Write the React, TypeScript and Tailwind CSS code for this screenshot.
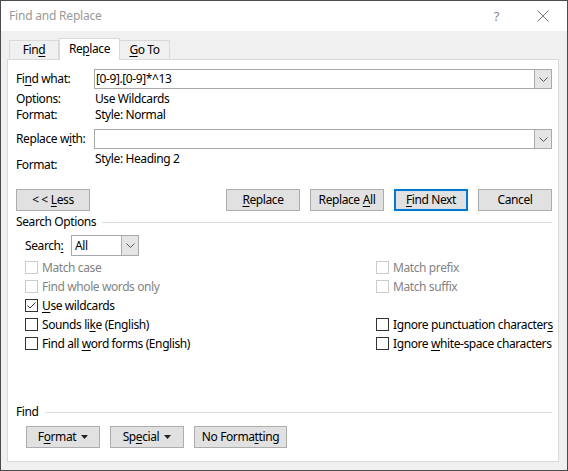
import type { ReactNode } from "react";

const FONT = { fontFamily: '"Noto Sans", "Open Sans", sans-serif' };

function Btn({ children, primary, w = "w-[74px]" }: { children: ReactNode; primary?: boolean; w?: string }) {
  return (
    <div
      className={`${w} h-[22px] flex items-center justify-center bg-[#e1e1e1] text-black ${
        primary ? "border-2 border-[#0078d7]" : "border border-[#adadad]"
      }`}
    >
      {children}
    </div>
  );
}

function Chevron() {
  return (
    <svg width="9" height="5" viewBox="0 0 9 5" fill="none">
      <path d="M0.5 0.5L4.5 4.5L8.5 0.5" stroke="#555" strokeWidth="1" />
    </svg>
  );
}

function Caret() {
  return (
    <svg width="7" height="4" viewBox="0 0 7 4" className="ml-[5px]">
      <path d="M0 0H7L3.5 4Z" fill="#222" />
    </svg>
  );
}

function Combo({ value }: { value?: string }) {
  return (
    <div className="flex-1 h-[20px] flex border border-[#a9a9a9] bg-white">
      <div className="flex-1 flex items-center pl-[1px] text-black">{value}</div>
      <div className="w-[17px] bg-[#e5e5e5] border-l border-[#acacac] flex items-center justify-center">
        <Chevron />
      </div>
    </div>
  );
}

function Check({ label, checked, disabled }: { label: ReactNode; checked?: boolean; disabled?: boolean }) {
  return (
    <div className="h-[19px] flex items-center gap-[4px] whitespace-nowrap">
      <div
        className={`w-[13px] h-[13px] shrink-0 border bg-white flex items-center justify-center ${
          disabled ? "border-[#cccccc]" : "border-[#333333]"
        }`}
      >
        {checked && (
          <svg width="11" height="11" viewBox="0 0 11 11" fill="none">
            <path d="M1.5 5.5L4 8L9.5 2.5" stroke="#333" strokeWidth="1" />
          </svg>
        )}
      </div>
      <span className={disabled ? "text-[#838383]" : "text-black"}>{label}</span>
    </div>
  );
}

function Section({ title }: { title: string }) {
  return (
    <div className="h-4 flex items-center gap-[6px]">
      <span className="text-black">{title}</span>
      <div className="flex-1 h-px bg-[#dcdcdc]" />
    </div>
  );
}

export default function App() {
  return (
    <div
      className="w-[568px] h-[471px] flex flex-col border border-[#4b4b4b] bg-[#f0f0f0] text-[12px] leading-4 tracking-[-0.4px] select-none"
      style={FONT}
    >
      {/* Title bar */}
      <div className="h-[30px] shrink-0 bg-white flex items-center pl-[8px]">
        <span className="text-[#999999] tracking-[-0.2px]">Find and Replace</span>
        <span className="ml-auto mr-[38px] text-[#888888] text-[13px]">?</span>
        <svg width="12" height="12" viewBox="0 0 12 12" className="mr-[18px]">
          <path d="M0.5 0.5L11.5 11.5M11.5 0.5L0.5 11.5" stroke="#777" strokeWidth="1" />
        </svg>
      </div>

      <div className="flex-1 flex flex-col pt-[7px] pl-[6px] pr-[8px] pb-[8px]">
        {/* Tabs */}
        <div className="flex items-end pl-[2px] h-[21px]">
          <div className="w-[50px] h-[19px] flex items-center justify-center border border-b-0 border-[#d9d9d9] text-black">
            <span>
              Fin<u className="underline-offset-2">d</u>
            </span>
          </div>
          <div className="relative z-10 w-[61px] h-[22px] -mb-px flex items-center justify-center bg-white border border-b-0 border-[#d9d9d9] text-black pb-[2px]">
            <span>
              Re<u className="underline-offset-2">p</u>lace
            </span>
          </div>
          <div className="w-[50px] h-[19px] flex items-center justify-center border border-b-0 border-l-0 border-[#d9d9d9] text-black">
            <span>
              <u className="underline-offset-2">G</u>o To
            </span>
          </div>
        </div>

        {/* Tab page */}
        <div className="flex-1 flex flex-col bg-white border border-[#d9d9d9] pt-[9px] pl-[8px] pr-[6px] pb-[13px] text-black">
          <div className="flex h-[20px] items-center">
            <span className="w-[78px]">
              Fi<u className="underline-offset-2">n</u>d what:
            </span>
            <Combo value="[0-9].[0-9]*^13" />
          </div>
          <div className="flex h-4 mt-[2px]">
            <span className="w-[79px]">Options:</span>
            <span>Use Wildcards</span>
          </div>
          <div className="flex h-4">
            <span className="w-[79px]">Format:</span>
            <span>Style: Normal</span>
          </div>

          <div className="flex h-[20px] items-center mt-[6px]">
            <span className="w-[78px]">
              Replace w<u className="underline-offset-2">i</u>th:
            </span>
            <Combo />
          </div>
          <div className="flex h-[22px] mt-[2px]">
            <span className="w-[79px] self-end">Format:</span>
            <span>Style: Heading 2</span>
          </div>

          {/* Action buttons */}
          <div className="flex h-[22px] mt-[16px]">
            <Btn w="w-[74px]">
              &lt; &lt; <u className="underline-offset-2 ml-[3px]">L</u>ess
            </Btn>
            <div className="ml-auto flex gap-[10px]">
              <Btn>
                <u className="underline-offset-2">R</u>eplace
              </Btn>
              <Btn>
                Replace <u className="underline-offset-2 ml-[3px]">A</u>ll
              </Btn>
              <Btn primary>
                <u className="underline-offset-2">F</u>ind Next
              </Btn>
              <Btn>Cancel</Btn>
            </div>
          </div>

          <div className="mt-[3px]">
            <Section title="Search Options" />
          </div>

          <div className="flex items-center h-[21px] mt-[5px] pl-[9px]">
            <span className="w-[46px]">
              Search<u className="underline-offset-2">:</u>
            </span>
            <div className="w-[68px] h-[21px] flex border border-[#a9a9a9] bg-white">
              <div className="flex-1 flex items-center pl-[3px]">All</div>
              <div className="w-[17px] bg-[#e5e5e5] border-l border-[#acacac] flex items-center justify-center">
                <Chevron />
              </div>
            </div>
          </div>

          {/* Option checkboxes */}
          <div className="grid grid-cols-[351px_1fr] mt-[2px] pl-[9px]">
            <div className="flex flex-col">
              <Check disabled label="Match case" />
              <Check disabled label="Find whole words only" />
              <Check
                checked
                label={
                  <>
                    <u className="underline-offset-2">U</u>se wildcards
                  </>
                }
              />
              <Check
                label={
                  <>
                    Sounds li<u className="underline-offset-2">k</u>e (English)
                  </>
                }
              />
              <Check
                label={
                  <>
                    Find all <u className="underline-offset-2">w</u>ord forms (English)
                  </>
                }
              />
            </div>
            <div className="flex flex-col">
              <Check disabled label="Match prefix" />
              <Check disabled label="Match suffix" />
              <div className="h-[19px]" />
              <Check
                label={
                  <>
                    Ignore punctuation character<u className="underline-offset-2">s</u>
                  </>
                }
              />
              <Check
                label={
                  <>
                    Ignore <u className="underline-offset-2">w</u>hite-space characters
                  </>
                }
              />
            </div>
          </div>

          <div className="mt-auto">
            <Section title="Find" />
          </div>
          <div className="flex gap-[10px] mt-[6px] pl-[10px]">
            <Btn>
              F<u className="underline-offset-2">o</u>rmat
              <Caret />
            </Btn>
            <Btn>
              Sp<u className="underline-offset-2">e</u>cial
              <Caret />
            </Btn>
            <Btn w="w-[93px]">
              No Forma<u className="underline-offset-2">t</u>ting
            </Btn>
          </div>
        </div>
      </div>
    </div>
  );
}
